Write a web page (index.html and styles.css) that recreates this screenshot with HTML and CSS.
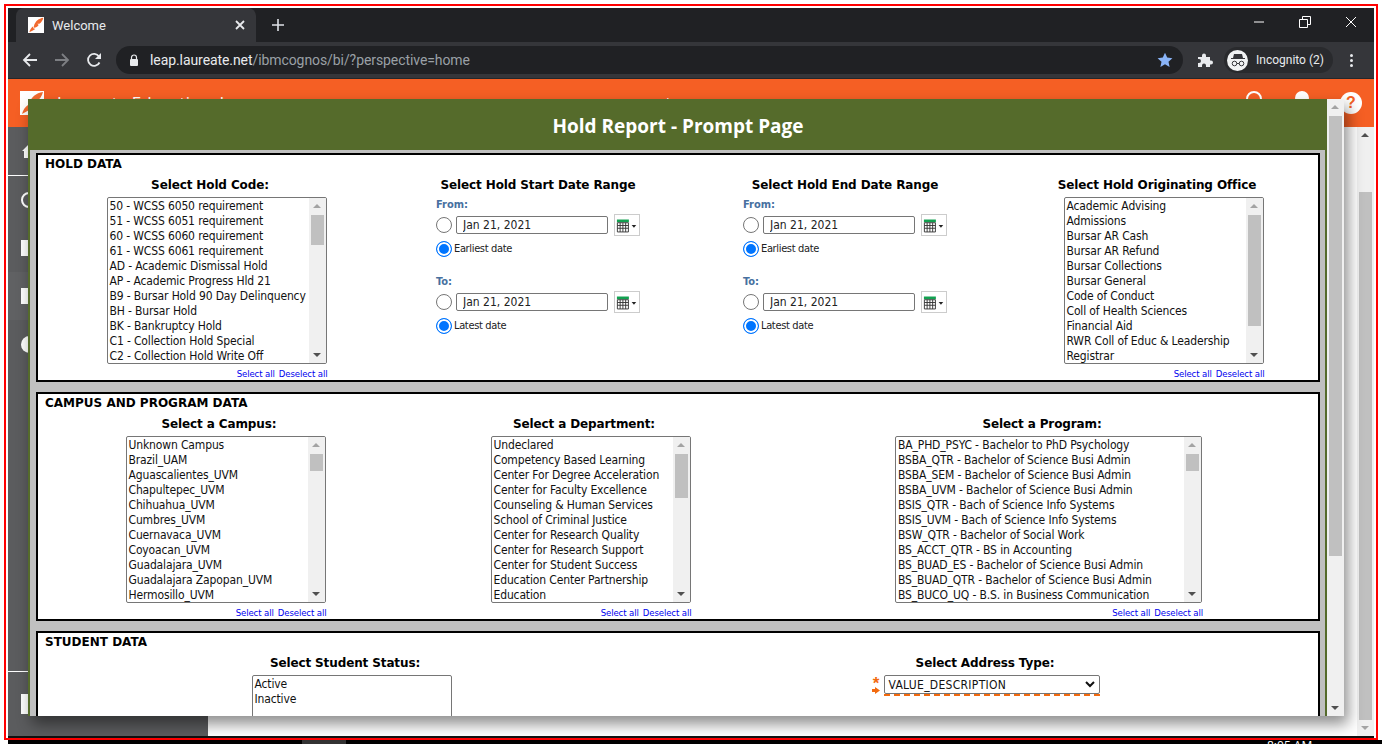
FILE: index.html
```html
<!DOCTYPE html>
<html lang="en">
<head>
  <meta charset="UTF-8" />
  <title>Welcome</title>
  <link rel="stylesheet" href="styles.css">
</head>
<body>
  <div class="frame">
    <div class="window">

      <div class="tabstrip">
        <div class="tab">
          <span class="favicon">
            <svg width="16" height="16" viewBox="0 0 24 24"><path d="M9 13C11 6 16 2 23 1 22 5 20 8 17 10L14 10 16 12C14 15 12 16 9 16Z" fill="#f26a2e"/><path d="M8 14 8 17 11 18C8 20 5 21 2 23 3 19 5 16 8 14Z" fill="#f26a2e"/></svg>
          </span>
          <span class="tab-title">Welcome</span>
          <svg class="tab-close" width="10" height="10" viewBox="0 0 10 10"><path d="M1 1 9 9M9 1 1 9" stroke="#e8eaed" stroke-width="1.8"/></svg>
        </div>
        <svg class="new-tab" width="14" height="14" viewBox="0 0 14 14"><path d="M7 1V13M1 7H13" stroke="#dee1e6" stroke-width="1.6"/></svg>
        <div class="win-controls">
          <svg width="12" height="12" viewBox="0 0 12 12"><path d="M1 6H11" stroke="#fff"/></svg>
          <svg width="12" height="12" viewBox="0 0 12 12"><path d="M.5 3.500H8.500V11.500H.5ZM3.500 3.500V.5H11.500V8.500H8.500" fill="none" stroke="#fff"/></svg>
          <svg width="12" height="12" viewBox="0 0 12 12"><path d="M1 1 11 11M11 1 1 11" stroke="#fff"/></svg>
        </div>
      </div>

      <div class="toolbar">
        <svg class="tool-back" width="16" height="16" viewBox="0 0 16 16"><path d="M15 8H2M8 2 2 8 8 14" fill="none" stroke="#e8eaed" stroke-width="1.8"/></svg>
        <svg class="tool-fwd" width="16" height="16" viewBox="0 0 16 16"><path d="M1 8H14M8 2 14 8 8 14" fill="none" stroke="#7d7f83" stroke-width="1.8"/></svg>
        <svg class="tool-reload" width="16" height="16" viewBox="0 0 16 16"><path d="M13.500 10.500A6 6 0 1 1 13 4.500" fill="none" stroke="#e8eaed" stroke-width="1.8"/><path d="M15 1V7H9Z" fill="#e8eaed"/></svg>
        <div class="omnibox">
          <svg width="10" height="12" viewBox="0 0 10 12"><path d="M2.500 5V3.500a2.500 2.500 0 0 1 5 0V5" fill="none" stroke="#e8eaed" stroke-width="1.2"/><rect x="1" y="5" width="8" height="7" rx="1" fill="#e8eaed"/></svg>
          <span class="url"><b>leap.laureate.net</b>/ibmcognos/bi/?perspective=home</span>
          <svg class="star" width="16" height="16" viewBox="0 0 16 16"><path d="M8 .8 10.200 5.600 15.400 6.200 11.500 9.700 12.600 14.900 8 12.300 3.400 14.900 4.500 9.700.6 6.200 5.800 5.600Z" fill="#8ab4f8"/></svg>
        </div>
        <svg class="puzzle" width="16" height="16" viewBox="0 0 16 16"><path d="M1 5H5V3.500a2 2 0 0 1 4 0V5H13V8.500H14a2 2 0 0 1 0 4H13V15H9V13.500a2 2 0 0 0-4 0V15H1V11H2a2 2 0 0 0 0-4H1Z" fill="#e8eaed"/></svg>
        <div class="incognito">
          <span class="inc-icon">
            <svg width="16" height="14" viewBox="0 0 16 14"><path d="M4 1H12L13 5H15V6H1V5H3Z" fill="#35363a"/><circle cx="4.500" cy="10.500" r="2.300" fill="none" stroke="#35363a"/><circle cx="11.500" cy="10.500" r="2.300" fill="none" stroke="#35363a"/><path d="M6.800 10.500H9.200" stroke="#35363a"/></svg>
          </span>
          <span>Incognito (2)</span>
        </div>
        <div class="kebab"><i></i><i></i><i></i></div>
      </div>

      <div class="app">
        <header class="app-head">
          <span class="app-logo">
            <svg width="24" height="24" viewBox="0 0 24 24"><path d="M9 13C11 6 16 2 23 1 22 5 20 8 17 10L14 10 16 12C14 15 12 16 9 16Z" fill="#f26a2e"/><path d="M8 14 8 17 11 18C8 20 5 21 2 23 3 19 5 16 8 14Z" fill="#f26a2e"/></svg>
          </span>
          <span class="app-name">Laureate Education, Inc.</span>
          <span class="app-welcome">Welcome</span>
          <span class="head-ring"></span>
          <span class="head-dot"></span>
          <span class="head-help">?</span>
        </header>

        <div class="app-main">
          <aside class="sidebar">
            <div class="side-item side-home"><svg width="16" height="16" viewBox="0 0 16 16"><path d="M8 1 15 8H13V15H3V8H1Z" fill="#fff"/></svg></div>
            <div class="side-item"><span class="side-ring"></span></div>
            <div class="side-item"><span class="side-box"></span></div>
            <div class="side-item side-light"><span class="side-box"></span></div>
            <div class="side-item"><span class="side-disc"></span></div>
            <div class="side-item side-last"><span class="side-box side-box-big"></span></div>
          </aside>
          <div class="page-blank">
            <div class="scrollbar page-scroll">
              <span class="arrow-up"></span>
              <span class="thumb"></span>
              <span class="arrow-down"></span>
            </div>
          </div>
        </div>

        <div class="modal">
          <h1 class="modal-title">Hold Report - Prompt Page</h1>
          <div class="modal-body">
            <div class="prompt">

              <section class="panel">
                <h2>HOLD DATA</h2>
                <div class="cols cols-hold">
                  <div class="col">
                    <h3>Select Hold Code:</h3>
                    <div class="pick">
                      <div class="listbox w220">
                        <ul>
                          <li>50 - WCSS 6050 requirement</li>
                          <li>51 - WCSS 6051 requirement</li>
                          <li>60 - WCSS 6060 requirement</li>
                          <li>61 - WCSS 6061 requirement</li>
                          <li>AD - Academic Dismissal Hold</li>
                          <li>AP - Academic Progress Hld 21</li>
                          <li>B9 - Bursar Hold 90 Day Delinquency</li>
                          <li>BH - Bursar Hold</li>
                          <li>BK - Bankruptcy Hold</li>
                          <li>C1 - Collection Hold Special</li>
                          <li>C2 - Collection Hold Write Off</li>
                        </ul>
                        <div class="scrollbar"><span class="arrow-up"></span><span class="thumb t30"></span><span class="arrow-down"></span></div>
                      </div>
                      <div class="sel-links"><a>Select all</a><a>Deselect all</a></div>
                    </div>
                  </div>

                  <div class="col">
                    <h3>Select Hold Start Date Range</h3>
                    <div class="dates">
                      <div class="date-label">From:</div>
                      <div class="date-row">
                        <input type="radio" class="radio" name="s1">
                        <input type="text" class="date-input" value="Jan 21, 2021">
                        <span class="cal"><svg width="25" height="15" viewBox="0 0 25 15"><rect x="1" y="1" width="13" height="3" fill="#12a150"/><path d="M1.500 4.500H13.500V14.500H1.500ZM1.500 7.500H13.500M1.500 10.500H13.500M4.500 4.500V14.500M7.500 4.500V14.500M10.500 4.500V14.500" fill="#fff" stroke="#333"/><path d="M17 7H22L19.500 10Z" fill="#222"/></svg></span>
                      </div>
                      <label class="date-opt"><input type="radio" class="radio" name="s1" checked>Earliest date</label>
                      <div class="date-label date-to">To:</div>
                      <div class="date-row">
                        <input type="radio" class="radio" name="s2">
                        <input type="text" class="date-input" value="Jan 21, 2021">
                        <span class="cal"><svg width="25" height="15" viewBox="0 0 25 15"><rect x="1" y="1" width="13" height="3" fill="#12a150"/><path d="M1.500 4.500H13.500V14.500H1.500ZM1.500 7.500H13.500M1.500 10.500H13.500M4.500 4.500V14.500M7.500 4.500V14.500M10.500 4.500V14.500" fill="#fff" stroke="#333"/><path d="M17 7H22L19.500 10Z" fill="#222"/></svg></span>
                      </div>
                      <label class="date-opt"><input type="radio" class="radio" name="s2" checked>Latest date</label>
                    </div>
                  </div>

                  <div class="col">
                    <h3>Select Hold End Date Range</h3>
                    <div class="dates">
                      <div class="date-label">From:</div>
                      <div class="date-row">
                        <input type="radio" class="radio" name="e1">
                        <input type="text" class="date-input" value="Jan 21, 2021">
                        <span class="cal"><svg width="25" height="15" viewBox="0 0 25 15"><rect x="1" y="1" width="13" height="3" fill="#12a150"/><path d="M1.500 4.500H13.500V14.500H1.500ZM1.500 7.500H13.500M1.500 10.500H13.500M4.500 4.500V14.500M7.500 4.500V14.500M10.500 4.500V14.500" fill="#fff" stroke="#333"/><path d="M17 7H22L19.500 10Z" fill="#222"/></svg></span>
                      </div>
                      <label class="date-opt"><input type="radio" class="radio" name="e1" checked>Earliest date</label>
                      <div class="date-label date-to">To:</div>
                      <div class="date-row">
                        <input type="radio" class="radio" name="e2">
                        <input type="text" class="date-input" value="Jan 21, 2021">
                        <span class="cal"><svg width="25" height="15" viewBox="0 0 25 15"><rect x="1" y="1" width="13" height="3" fill="#12a150"/><path d="M1.500 4.500H13.500V14.500H1.500ZM1.500 7.500H13.500M1.500 10.500H13.500M4.500 4.500V14.500M7.500 4.500V14.500M10.500 4.500V14.500" fill="#fff" stroke="#333"/><path d="M17 7H22L19.500 10Z" fill="#222"/></svg></span>
                      </div>
                      <label class="date-opt"><input type="radio" class="radio" name="e2" checked>Latest date</label>
                    </div>
                  </div>

                  <div class="col">
                    <h3>Select Hold Originating Office</h3>
                    <div class="pick">
                      <div class="listbox w200">
                        <ul>
                          <li>Academic Advising</li>
                          <li>Admissions</li>
                          <li>Bursar AR Cash</li>
                          <li>Bursar AR Refund</li>
                          <li>Bursar Collections</li>
                          <li>Bursar General</li>
                          <li>Code of Conduct</li>
                          <li>Coll of Health Sciences</li>
                          <li>Financial Aid</li>
                          <li>RWR Coll of Educ &amp; Leadership</li>
                          <li>Registrar</li>
                        </ul>
                        <div class="scrollbar"><span class="arrow-up"></span><span class="thumb t111"></span><span class="arrow-down"></span></div>
                      </div>
                      <div class="sel-links"><a>Select all</a><a>Deselect all</a></div>
                    </div>
                  </div>
                </div>
              </section>

              <section class="panel">
                <h2>CAMPUS AND PROGRAM DATA</h2>
                <div class="cols cols-campus">
                  <div class="col">
                    <h3>Select a Campus:</h3>
                    <div class="pick">
                      <div class="listbox w200">
                        <ul>
                          <li>Unknown Campus</li>
                          <li>Brazil_UAM</li>
                          <li>Aguascalientes_UVM</li>
                          <li>Chapultepec_UVM</li>
                          <li>Chihuahua_UVM</li>
                          <li>Cumbres_UVM</li>
                          <li>Cuernavaca_UVM</li>
                          <li>Coyoacan_UVM</li>
                          <li>Guadalajara_UVM</li>
                          <li>Guadalajara Zapopan_UVM</li>
                          <li>Hermosillo_UVM</li>
                        </ul>
                        <div class="scrollbar"><span class="arrow-up"></span><span class="thumb t17"></span><span class="arrow-down"></span></div>
                      </div>
                      <div class="sel-links"><a>Select all</a><a>Deselect all</a></div>
                    </div>
                  </div>

                  <div class="col">
                    <h3>Select a Department:</h3>
                    <div class="pick">
                      <div class="listbox w200">
                        <ul>
                          <li>Undeclared</li>
                          <li>Competency Based Learning</li>
                          <li>Center For Degree Acceleration</li>
                          <li>Center for Faculty Excellence</li>
                          <li>Counseling &amp; Human Services</li>
                          <li>School of Criminal Justice</li>
                          <li>Center for Research Quality</li>
                          <li>Center for Research Support</li>
                          <li>Center for Student Success</li>
                          <li>Education Center Partnership</li>
                          <li>Education</li>
                        </ul>
                        <div class="scrollbar"><span class="arrow-up"></span><span class="thumb t44"></span><span class="arrow-down"></span></div>
                      </div>
                      <div class="sel-links"><a>Select all</a><a>Deselect all</a></div>
                    </div>
                  </div>

                  <div class="col">
                    <h3>Select a Program:</h3>
                    <div class="pick">
                      <div class="listbox w307">
                        <ul>
                          <li>BA_PHD_PSYC - Bachelor to PhD Psychology</li>
                          <li>BSBA_QTR - Bachelor of Science Busi Admin</li>
                          <li>BSBA_SEM - Bachelor of Science Busi Admin</li>
                          <li>BSBA_UVM - Bachelor of Science Busi Admin</li>
                          <li>BSIS_QTR - Bach of Science Info Systems</li>
                          <li>BSIS_UVM - Bach of Science Info Systems</li>
                          <li>BSW_QTR - Bachelor of Social Work</li>
                          <li>BS_ACCT_QTR - BS in Accounting</li>
                          <li>BS_BUAD_ES - Bachelor of Science Busi Admin</li>
                          <li>BS_BUAD_QTR - Bachelor of Science Busi Admin</li>
                          <li>BS_BUCO_UQ - B.S. in Business Communication</li>
                        </ul>
                        <div class="scrollbar"><span class="arrow-up"></span><span class="thumb t17"></span><span class="arrow-down"></span></div>
                      </div>
                      <div class="sel-links"><a>Select all</a><a>Deselect all</a></div>
                    </div>
                  </div>
                </div>
              </section>

              <section class="panel">
                <h2>STUDENT DATA</h2>
                <div class="cols cols-student">
                  <div class="col">
                    <h3>Select Student Status:</h3>
                    <div class="pick">
                      <div class="listbox w200">
                        <ul>
                          <li>Active</li>
                          <li>Inactive</li>
                        </ul>
                      </div>
                    </div>
                  </div>

                  <div class="col">
                    <h3>Select Address Type:</h3>
                    <div class="pick">
                      <div class="required">
                        <span class="req-marks"><span class="req-star">*</span><svg width="8" height="7" viewBox="0 0 8 7"><path d="M0 2H3V0L8 3.500 3 7V5H0Z" fill="#f26a0f"/></svg></span>
                        <div class="dropdown">
                          <span>VALUE_DESCRIPTION</span>
                          <svg width="10" height="7" viewBox="0 0 10 7"><path d="M1 1 5 5 9 1" fill="none" stroke="#111" stroke-width="2"/></svg>
                        </div>
                      </div>
                    </div>
                  </div>
                </div>
              </section>

            </div>
            <div class="scrollbar modal-scroll">
              <span class="arrow-up"></span>
              <span class="thumb"></span>
              <span class="arrow-down"></span>
            </div>
          </div>
        </div>
      </div>
    </div>
  </div>
  <div class="taskbar">
    <span class="task-btn"></span>
    <span class="task-clock">8:05 AM</span>
  </div>
</body>
</html>
```

FILE: styles.css
```css
* {
  box-sizing: border-box;
}
html, body {
  height: 100%;
}
body {
  margin: 0;
  background-color: white;
  overflow: hidden;
  font-family: "DejaVu Sans", sans-serif;
}
.frame {
  width: 1374px;
  height: 736px;
  margin: 4px 4px 0 4px;
  border: 2px solid #f00;
  padding: 2px 2px 0 2px;
}
.window {
  height: 730px;
  display: flex;
  flex-direction: column;
  border-bottom: 2px solid #111;
}

/* browser chrome */
.tabstrip {
  height: 34px;
  flex-shrink: 0;
  display: flex;
  align-items: flex-end;
  background-color: #202124;
  padding-left: 8px;
}
.tab {
  width: 240px;
  height: 34px;
  display: flex;
  align-items: center;
  background-color: #35363a;
  border-radius: 8px 8px 0 0;
  padding: 0 11px 0 12px;
}
.favicon {
  width: 16px;
  height: 16px;
  background-color: white;
  margin-right: 8px;
  display: flex;
}
.tab-title {
  flex: 1;
  color: #e8eaed;
  font: 13px "Roboto", sans-serif;
}
.new-tab {
  margin: 0 0 10px 15px;
}
.win-controls {
  margin-left: auto;
  height: 34px;
  display: flex;
  align-items: center;
  gap: 34px;
  padding: 0 17px 6px 0;
}
.toolbar {
  height: 37px;
  flex-shrink: 0;
  display: flex;
  align-items: center;
  background-color: #35363a;
  border-bottom: 1px solid #26272a;
  padding-left: 14px;
}
.tool-back, .tool-fwd {
  margin-right: 16px;
}
.tool-reload {
  margin-right: 14px;
}
.omnibox {
  width: 1067px;
  height: 28px;
  display: flex;
  align-items: center;
  background-color: #202124;
  border-radius: 14px;
  padding: 0 10px 0 13px;
}
.url {
  flex: 1;
  margin-left: 11px;
  color: #9aa0a6;
  font: 14px "Roboto", sans-serif;
  letter-spacing: -0.08px;
}
.url b {
  font-weight: normal;
  color: #e8eaed;
}
.puzzle {
  margin-left: 14px;
}
.incognito {
  width: 109px;
  height: 26px;
  margin-left: 11px;
  display: flex;
  align-items: center;
  background-color: #292a2d;
  border-radius: 13px;
  color: #e8eaed;
  font: 12px "Roboto", sans-serif;
  padding-left: 3px;
}
.inc-icon {
  width: 21px;
  height: 21px;
  border-radius: 50%;
  background-color: #f1f3f4;
  display: flex;
  align-items: center;
  justify-content: center;
  margin-right: 8px;
}
.kebab {
  margin-left: 17px;
  display: flex;
  flex-direction: column;
  gap: 2px;
}
.kebab i {
  width: 3px;
  height: 3px;
  border-radius: 50%;
  background-color: #e8eaed;
}

/* cognos shell behind the dialog */
.app {
  flex: 1;
  position: relative;
  display: flex;
  flex-direction: column;
  min-height: 0;
}
.app-head {
  height: 48px;
  flex-shrink: 0;
  display: flex;
  background-color: #f55f24;
  color: white;
  padding: 12px 0 0 12px;
  position: relative;
}
.app-logo {
  width: 24px;
  height: 24px;
  background-color: white;
}
.app-name {
  margin-left: 13px;
  font: 17px "Open Sans", sans-serif;
  line-height: 24px;
  width: 590px;
}
.app-welcome {
  font: 13px "Open Sans", sans-serif;
  line-height: 24px;
}
.head-ring, .head-dot, .head-help {
  position: absolute;
  border-radius: 50%;
}
.head-ring {
  left: 1238px;
  top: 12px;
  width: 16px;
  height: 16px;
  border: 2px solid white;
}
.head-dot {
  left: 1287px;
  top: 12px;
  width: 14px;
  height: 14px;
  background-color: white;
}
.head-help {
  left: 1332px;
  top: 13px;
  width: 22px;
  height: 22px;
  background-color: white;
  color: #f55f24;
  font: bold 16px/22px "Liberation Sans", sans-serif;
  text-align: center;
}
.app-main {
  flex: 1;
  display: flex;
  min-height: 0;
}
.sidebar {
  width: 200px;
  display: flex;
  flex-direction: column;
  background-color: #5b5c5e;
}
.side-item {
  height: 48px;
  display: flex;
  align-items: center;
  padding-left: 13px;
}
.side-home {
  height: 49px;
  border-bottom: 1px solid white;
}
.side-light {
  background-color: #606163;
}
.side-last {
  margin-top: auto;
  height: 65px;
  border-top: 1px solid white;
}
.side-ring {
  width: 16px;
  height: 16px;
  border: 2px solid white;
  border-radius: 50%;
}
.side-box {
  width: 16px;
  height: 16px;
  background-color: white;
}
.side-box-big {
  height: 20px;
}
.side-disc {
  width: 17px;
  height: 17px;
  border-radius: 50%;
  background-color: white;
}
.page-blank {
  flex: 1;
  display: flex;
  justify-content: flex-end;
  background-color: white;
}

/* scrollbars */
.scrollbar {
  width: 17px;
  flex-shrink: 0;
  display: flex;
  flex-direction: column;
  align-items: center;
  background-color: #f0f0f0;
  position: relative;
  padding-top: 17px;
}
.thumb {
  width: 13px;
  background-color: #c0c0c0;
}
.arrow-up, .arrow-down {
  position: absolute;
  left: 4px;
  width: 0;
  height: 0;
  border-left: 4px solid transparent;
  border-right: 4px solid transparent;
}
.arrow-up {
  top: 6px;
  border-bottom: 4px solid #a3a3a3;
}
.arrow-down {
  bottom: 6px;
  border-top: 4px solid #505050;
}
.page-scroll .thumb {
  margin-top: 48px;
  height: 528px;
}
.page-scroll .arrow-up {
  border-bottom-color: #505050;
}
.page-scroll .arrow-down {
  border-top-color: #a3a3a3;
}
.modal-scroll .thumb {
  height: 440px;
}
.t17 { height: 17px; }
.t30 { height: 30px; }
.t44 { height: 44px; }
.t111 { height: 111px; }

/* prompt dialog */
.modal {
  position: absolute;
  left: 20px;
  top: 20px;
  width: 1316px;
  height: 617px;
  display: flex;
  flex-direction: column;
  box-shadow: 4px 8px 14px rgba(0, 0, 0, 0.45);
}
.modal-title {
  height: 51px;
  flex-shrink: 0;
  margin: 0;
  background-color: #556b2b;
  color: white;
  font: bold 19px/54px "Open Sans", sans-serif;
  text-align: center;
  padding-right: 16px;
}
.modal-body {
  flex: 1;
  display: flex;
  min-height: 0;
}
.modal-body > .scrollbar {
  margin-top: -51px;
  background-color: #f0f0f0;
}
.prompt {
  flex: 1;
  overflow: hidden;
  background-color: #c0c0c0;
  border-left: 2px solid #556b2b;
  border-right: 2px solid #556b2b;
  padding: 3px 5px 0 6px;
  display: flex;
  flex-direction: column;
  gap: 10px;
}
.panel {
  flex-shrink: 0;
  background-color: white;
  border: 2px solid black;
  padding-bottom: 1px;
}
.panel h2 {
  height: 18px;
  margin: 0 0 4px 0;
  padding-left: 7px;
  font-size: 12px;
  line-height: 18px;
  font-weight: bold;
  color: black;
}
.cols {
  display: grid;
}
.cols-hold {
  grid-template-columns: 344px 312px 302px 322px;
}
.cols-campus {
  grid-template-columns: 362px 368px 548px;
}
.cols-student {
  grid-template-columns: 614px 666px;
}
.col {
  display: flex;
  flex-direction: column;
  align-items: center;
}
.col h3 {
  height: 14px;
  margin: 0 0 6px 0;
  font-size: 12px;
  line-height: 16px;
  letter-spacing: -0.12px;
  font-weight: bold;
  color: black;
  white-space: nowrap;
}
.pick {
  margin-left: 13px;
  display: flex;
  flex-direction: column;
}

/* list boxes */
.listbox {
  height: 167px;
  display: flex;
  border: 1px solid #767676;
  border-radius: 2px;
  background-color: white;
  overflow: hidden;
}
.w200 { width: 200px; }
.w220 { width: 220px; }
.w307 { width: 307px; }
.listbox ul {
  flex: 1;
  list-style: none;
  margin: 0;
  padding: 1px 0 0 2px;
  overflow: hidden;
}
.listbox li {
  height: 15px;
  font-size: 12px;
  font-stretch: condensed;
  letter-spacing: -0.14px;
  line-height: 15px;
  color: #111;
  white-space: nowrap;
}
.sel-links {
  display: flex;
  justify-content: flex-end;
  gap: 4px;
  margin: 4px -1px 0 0;
  height: 11px;
  font-size: 9.5px;
  font-stretch: condensed;
  letter-spacing: -0.1px;
  line-height: 12px;
  color: #0000ee;
}

/* date ranges */
.dates {
  width: 204px;
  margin-top: 1px;
  font-stretch: condensed;
}
.date-label {
  height: 14px;
  margin-bottom: 2px;
  font-size: 11px;
  line-height: 14px;
  font-weight: bold;
  color: #47709f;
}
.date-to {
  margin-top: 17px;
}
.date-row {
  height: 22px;
  display: flex;
  align-items: center;
}
.date-input {
  width: 152px;
  height: 18px;
  margin: 0 6px 0 4px;
  border: 1px solid #767676;
  border-radius: 2px;
  padding: 0 6px;
  font: 12px "DejaVu Sans", sans-serif;
  font-stretch: condensed;
  color: #222;
  background-color: white;
}
.cal {
  width: 26px;
  height: 22px;
  border: 1px solid #ccc;
  padding-left: 1px;
  display: flex;
  align-items: center;
  justify-content: center;
}
.date-opt {
  height: 18px;
  margin-top: 4px;
  display: flex;
  align-items: center;
  gap: 2px;
  font-size: 11px;
  letter-spacing: -0.35px;
  line-height: 16px;
  color: #222;
}
.radio {
  appearance: none;
  width: 16px;
  height: 16px;
  margin: 0;
  flex-shrink: 0;
  border: 1px solid #767676;
  border-radius: 50%;
  background-color: white;
}
.radio:checked {
  border: 1px solid #0075ff;
  background-color: #0075ff;
  box-shadow: inset 0 0 0 2px white;
}

/* required drop down */
.required {
  display: flex;
  margin-left: -12px;
}
.req-marks {
  width: 12px;
  height: 20px;
  display: flex;
  flex-direction: column;
  align-items: center;
  padding-right: 3px;
}
.req-star {
  height: 12px;
  color: #f26a0f;
  font: bold 17px/17px "Liberation Sans", sans-serif;
}
.dropdown {
  width: 216px;
  height: 19px;
  display: flex;
  align-items: center;
  justify-content: space-between;
  border: 1px solid #767676;
  border-radius: 2px;
  padding: 0 4px 0 4px;
  font-size: 12px;
  font-stretch: condensed;
  letter-spacing: 0.3px;
  color: #111;
  position: relative;
}
.dropdown::after {
  content: "";
  position: absolute;
  left: -1px;
  right: -1px;
  bottom: -3px;
  border-bottom: 2px dashed #f26a0f;
}

/* desktop task bar, mostly off screen */
.taskbar {
  height: 4px;
  margin-left: 8px;
  background-color: black;
  display: flex;
  overflow: hidden;
}
.task-btn {
  width: 44px;
  margin-left: 294px;
  background-color: #333;
}
.task-clock {
  margin-left: 921px;
  color: white;
  font: 12px/12px "Open Sans", sans-serif;
}
```
